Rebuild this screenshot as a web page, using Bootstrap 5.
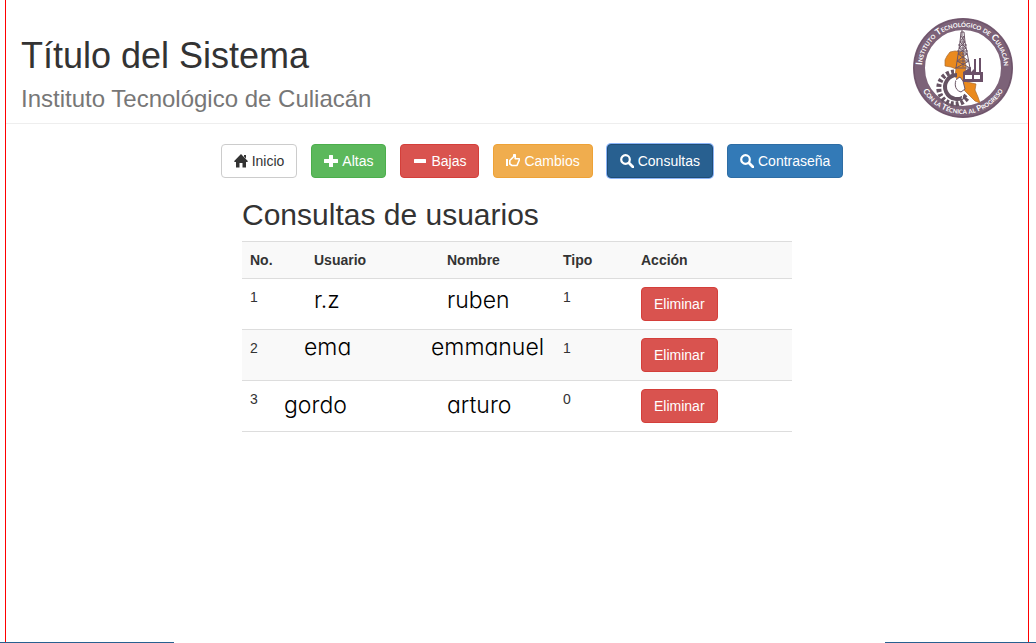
<!DOCTYPE html>
<html lang="es">
<head>
<meta charset="utf-8">
<meta name="viewport" content="width=device-width, initial-scale=1">
<title>Título del Sistema</title>
<link href="https://cdn.jsdelivr.net/npm/bootstrap@5.3.0/dist/css/bootstrap.min.css" rel="stylesheet">
<style>
body { font: 14px/20px "Liberation Sans", Arial, sans-serif; color: #333; background: #fff; }
.page-wrap { flex: 1; margin: 0 7px 0 5px; border: solid #f00; border-width: 0 1px; }
.site-head { border-bottom: 1px solid #eee; padding: 18px 15px 5px; }
.site-head h1 { font-size: 36px; line-height: 40px; font-weight: 400; margin: 18px 0 0; }
.site-head .subtitle { font-size: 24px; line-height: 28px; color: #777; margin: 9px 0 0; }
.site-logo { width: 100px; height: 100px; flex: none; }
.menu { gap: 14px; padding: 20px 0 0 30px; }
.btn { --bs-btn-font-size: 14px; --bs-btn-padding-x: 12px; --bs-btn-padding-y: 6px; --bs-btn-line-height: 20px; --bs-btn-border-radius: 4px; --bs-btn-color: #fff; }
.menu .btn { display: inline-flex; align-items: center; gap: 4px; }
.menu svg { width: 14px; height: 14px; fill: currentColor; flex: none; }
.b-home { --bs-btn-color: #333; --bs-btn-bg: #fff; --bs-btn-border-color: #ccc; }
.b-add { --bs-btn-bg: #5cb85c; --bs-btn-border-color: #4cae4c; }
.b-del { --bs-btn-bg: #d9534f; --bs-btn-border-color: #d43f3a; }
.b-edit { --bs-btn-bg: #f0ad4e; --bs-btn-border-color: #eea236; }
.b-find { --bs-btn-bg: #337ab7; --bs-btn-border-color: #2e6da4; }
.b-find.current { --bs-btn-bg: #286090; --bs-btn-border-color: #204d74; box-shadow: 0 0 0 1px #8ab4f8; }
.users { max-width: 550px; }
.users h2 { font-size: 30px; line-height: 34px; font-weight: 400; margin: 20px 0 9px; }
.users .table { table-layout: fixed; border-bottom: 1px solid #ddd; margin: 0; color: #333; --bs-table-color: #333; }
.users .table > * > tr > * { border: 0; border-top: 1px solid #ddd; padding: 8px; box-shadow: none; vertical-align: top; background: none; color: #333; }
.users .table > * > tr:nth-child(even) > *, .users .table > thead > tr > * { background: #f9f9f9; }
.c-no { width: 34px; } .c-user { width: 147px; } .c-name { width: 132px; } .c-type { width: 78px; }
.users .table .pen { font: 300 23px/26px Inter, "Liberation Sans", sans-serif; font-feature-settings: "cv11"; color: #000; white-space: nowrap; }
.users .table .in-1 { padding-left: 24px; }
.users .table .in-2 { padding-left: 28px; }
.users .table .in-3 { padding-left: 38px; }
.users .table .up { padding-top: 4px; }
.users .table .down { padding-top: 11px; }
.foot-line div { height: 1px; background: #286090; }
.foot-a { width: 174px; } .foot-b { width: 151px; }
</style>
</head>
<body class="d-flex flex-column min-vh-100">
<div class="page-wrap">
  <header class="site-head d-flex justify-content-between align-items-start">
    <div>
      <h1>Título del Sistema</h1>
      <p class="subtitle">Instituto Tecnológico de Culiacán</p>
    </div>
    <svg class="site-logo" viewBox="0 0 100 100" role="img" aria-label="Instituto Tecnológico de Culiacán">
      <defs>
        <path id="arcTop" d="M9 50a41 41 0 1 1 82 0a41 41 0 0 1-1 9"/>
        <path id="arcLow" d="M4 50a46 46 0 0 0 92 0"/>
      </defs>
      <circle cx="50" cy="50" r="44" fill="#fff" stroke="#7c6278" stroke-width="12"/>
      <circle cx="50" cy="50" r="49" fill="none" stroke="#6c5268"/>
      <g fill="#fff" font-family="Lato, sans-serif" font-weight="700" font-variant="small-caps" text-anchor="middle">
        <text font-size="9"><textPath href="#arcTop" startOffset="47%">Instituto Tecnológico de Culiacán</textPath></text>
        <text font-size="8"><textPath href="#arcLow" startOffset="50%">Con la Técnica al Progreso</textPath></text>
      </g>
      <path d="M32 42l2-4 3-4 5-1 8 1 3 14-1 7 2 9 9 2-1 6 3 7 2 6-5-2-5-5-5-5-7-10-3-5 1-7-5-2-6-1z" fill="#ea8a1e" stroke="#a86a30" stroke-width=".7"/>
      <path d="M47 59a8 8 0 0 0 1 15l4-3-2-8z" fill="#fff" stroke="#6b5565"/>
      <path d="M44 57a12 12 0 1 0 9 20" fill="none" stroke="#655262" stroke-width="4"/>
      <path d="M41 54a16 16 0 1 0 14 25" fill="none" stroke="#655262" stroke-width="5" stroke-dasharray="3 2"/>
      <path d="M41 60l3 3M37 66l4 1M37 73l5-2M42 79l3-4M49 81l1-5" stroke="#fff"/>
      <path d="M48 14h3M48 14l-1 10-4 26M51 14l1 10 5 26M47 24h5M46 30h7M45 36h9M44 43h12M42 50h16M49 12v6M48 18l4 6-6 6 8 6-10 7 13 7M51 18l-4 6 6 6-8 6 11 7-13 7M45 27h9M44 33h11M50 18v31" fill="none" stroke="#6b5565" stroke-width="1"/>
      <path d="M50 54l8-5v5l3-3V41h2v13h3V40h2v14h2v10H50z" fill="#6b5068"/>
      <path d="M52 57h7v4h-7zM61 57h6v4h-6z" fill="#fff"/>
    </svg>
  </header>

  <nav class="menu d-flex flex-wrap justify-content-center" aria-label="Menú">
    <button type="button" class="btn b-home"><svg viewBox="0 0 14 14"><path d="M7 0l7 7.200-.8.800H12v5.500H8.500V9h-3v4.500H2V8H.8L0 7.200zM10 1h2v3.500l-2-2z"/></svg>Inicio</button>
    <button type="button" class="btn b-add"><svg viewBox="0 0 14 14"><path d="M5 1.500Q5 1 5.500 1h3q.5 0 .5.500V5h4.500q.5 0 .5.500v3q0 .5-.5.500H9v3.500q0 .5-.5.500h-3q-.5 0-.5-.5V9H.5Q0 9 0 8.500v-3Q0 5 .5 5H5z"/></svg>Altas</button>
    <button type="button" class="btn b-del"><svg viewBox="0 0 14 14"><rect x="1" y="5" width="12" height="4" rx=".5"/></svg>Bajas</button>
    <button type="button" class="btn b-edit"><svg viewBox="0 0 14 14"><path d="M0 5h2v7H0z"/><path d="M3.800 6.500L7.800 2.500V.8h1.400v4h4q.6.800 0 1.500l-2.200 5.200H6L3.800 10z" fill="none" stroke="currentColor" stroke-width="1.600" stroke-linejoin="round"/></svg>Cambios</button>
    <button type="button" class="btn b-find current" aria-current="page"><svg viewBox="0 0 14 14"><circle cx="5.500" cy="5.500" r="4.300" fill="none" stroke="currentColor" stroke-width="2.200"/><path d="M9 9l4 4" stroke="currentColor" stroke-width="2.800" stroke-linecap="round"/></svg>Consultas</button>
    <button type="button" class="btn b-find"><svg viewBox="0 0 14 14"><circle cx="5.500" cy="5.500" r="4.300" fill="none" stroke="currentColor" stroke-width="2.200"/><path d="M9 9l4 4" stroke="currentColor" stroke-width="2.800" stroke-linecap="round"/></svg>Contraseña</button>
  </nav>

  <main class="users mx-auto">
    <h2>Consultas de usuarios</h2>
    <table class="table">
      <thead>
        <tr><th class="c-no" scope="col">No.</th><th class="c-user in-3" scope="col">Usuario</th><th class="c-name in-1" scope="col">Nombre</th><th class="c-type" scope="col">Tipo</th><th scope="col">Acción</th></tr>
      </thead>
      <tbody>
        <tr><td>1</td><td class="pen in-3">r.z</td><td class="pen in-1">ruben</td><td>1</td><td><button type="button" class="btn b-del">Eliminar</button></td></tr>
        <tr><td>2</td><td class="pen in-2 up">ema</td><td class="pen up">emmanuel</td><td>1</td><td><button type="button" class="btn b-del">Eliminar</button></td></tr>
        <tr><td>3</td><td class="pen down">gordo</td><td class="pen in-1 down">arturo</td><td>0</td><td><button type="button" class="btn b-del">Eliminar</button></td></tr>
      </tbody>
    </table>
  </main>
</div>
<div class="foot-line d-flex justify-content-between"><div class="foot-a"></div><div class="foot-b"></div></div>
<script src="https://cdn.jsdelivr.net/npm/bootstrap@5.3.0/dist/js/bootstrap.bundle.min.js"></script>
</body>
</html>
